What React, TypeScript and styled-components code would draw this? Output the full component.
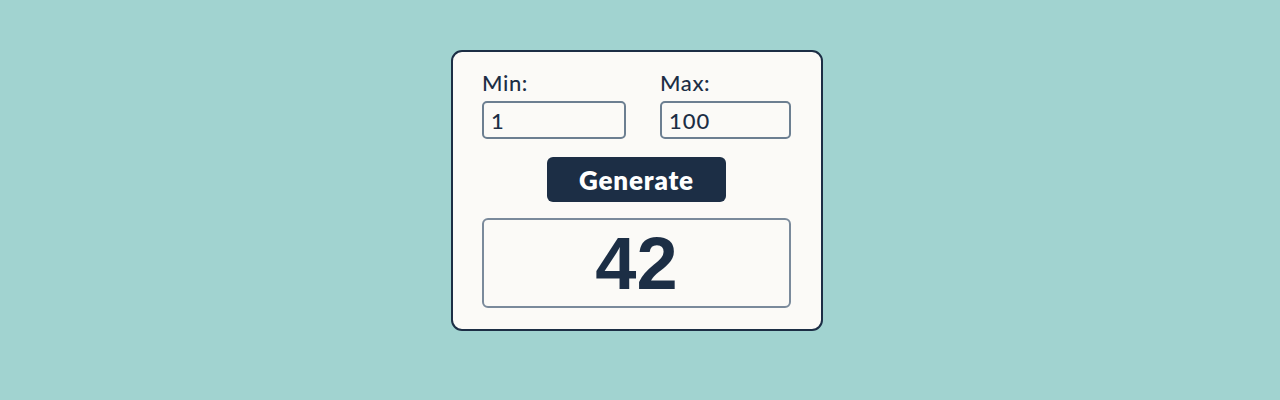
import React, { useState } from 'react';
import styled, { createGlobalStyle } from 'styled-components';

const GlobalStyle = createGlobalStyle`
  html, body {
    margin: 0;
    padding: 0;
    background: #a1d3d0;
  }
`;

const Page = styled.div`
  width: 1280px;
  height: 400px;
  display: flex;
  justify-content: center;
  align-items: flex-start;
  padding: 50px 6px 0 0;
  box-sizing: border-box;
  font-family: Lato, 'Noto Sans', sans-serif;
  color: #1c2e45;
`;

const Card = styled.div`
  width: 372px;
  height: 281px;
  box-sizing: border-box;
  background: #fbfaf7;
  border: 2px solid #1c2e45;
  border-radius: 11px;
  padding: 16px 30px 20px 29px;
  display: flex;
  flex-direction: column;
  align-items: center;
`;

const Fields = styled.div`
  width: 100%;
  display: grid;
  grid-template-columns: 144px 131px;
  justify-content: space-between;
`;

const Field = styled.label`
  display: flex;
  flex-direction: column;
`;

const Label = styled.span`
  font-size: 22px;
  font-weight: 500;
  letter-spacing: 0.6px;
  line-height: 30px;
  margin-bottom: 3px;
`;

const Input = styled.input`
  height: 38px;
  box-sizing: border-box;
  width: 100%;
  border: 2px solid #6c7f91;
  border-radius: 5px;
  background: #fbfaf7;
  padding: 0 7px;
  font-family: Lato, 'Noto Sans', sans-serif;
  font-size: 22px;
  font-weight: 500;
  letter-spacing: 1px;
  color: #1c2e45;
  outline: none;
`;

const Button = styled.button`
  margin-top: 18px;
  width: 179px;
  height: 45px;
  border: none;
  border-radius: 6px;
  background: #1c2e45;
  color: #ffffff;
  font-family: Lato, 'Noto Sans', sans-serif;
  font-weight: 800;
  font-size: 26px;
  letter-spacing: 0.8px;
  cursor: pointer;
`;

const Result = styled.div`
  margin-top: 16px;
  width: 100%;
  height: 90px;
  box-sizing: border-box;
  border: 2px solid #7a8a9b;
  border-radius: 6px;
  display: flex;
  align-items: center;
  justify-content: center;
  font-family: 'Liberation Sans', Arial, sans-serif;
  font-weight: 700;
  font-size: 74px;
  line-height: 1;
  padding-top: 2px;
  color: #1c2e45;
`;

export default function App() {
  const [min, setMin] = useState('1');
  const [max, setMax] = useState('100');
  const [value, setValue] = useState(42);

  const generate = () => {
    const lo = parseInt(min, 10);
    const hi = parseInt(max, 10);
    if (isNaN(lo) || isNaN(hi) || hi < lo) return;
    setValue(lo + Math.floor(Math.random() * (hi - lo + 1)));
  };

  return (
    <Page>
      <GlobalStyle />
      <Card>
        <Fields>
          <Field>
            <Label>Min:</Label>
            <Input value={min} onChange={(e) => setMin(e.target.value)} />
          </Field>
          <Field>
            <Label>Max:</Label>
            <Input value={max} onChange={(e) => setMax(e.target.value)} />
          </Field>
        </Fields>
        <Button onClick={generate}>Generate</Button>
        <Result>{value}</Result>
      </Card>
    </Page>
  );
}
